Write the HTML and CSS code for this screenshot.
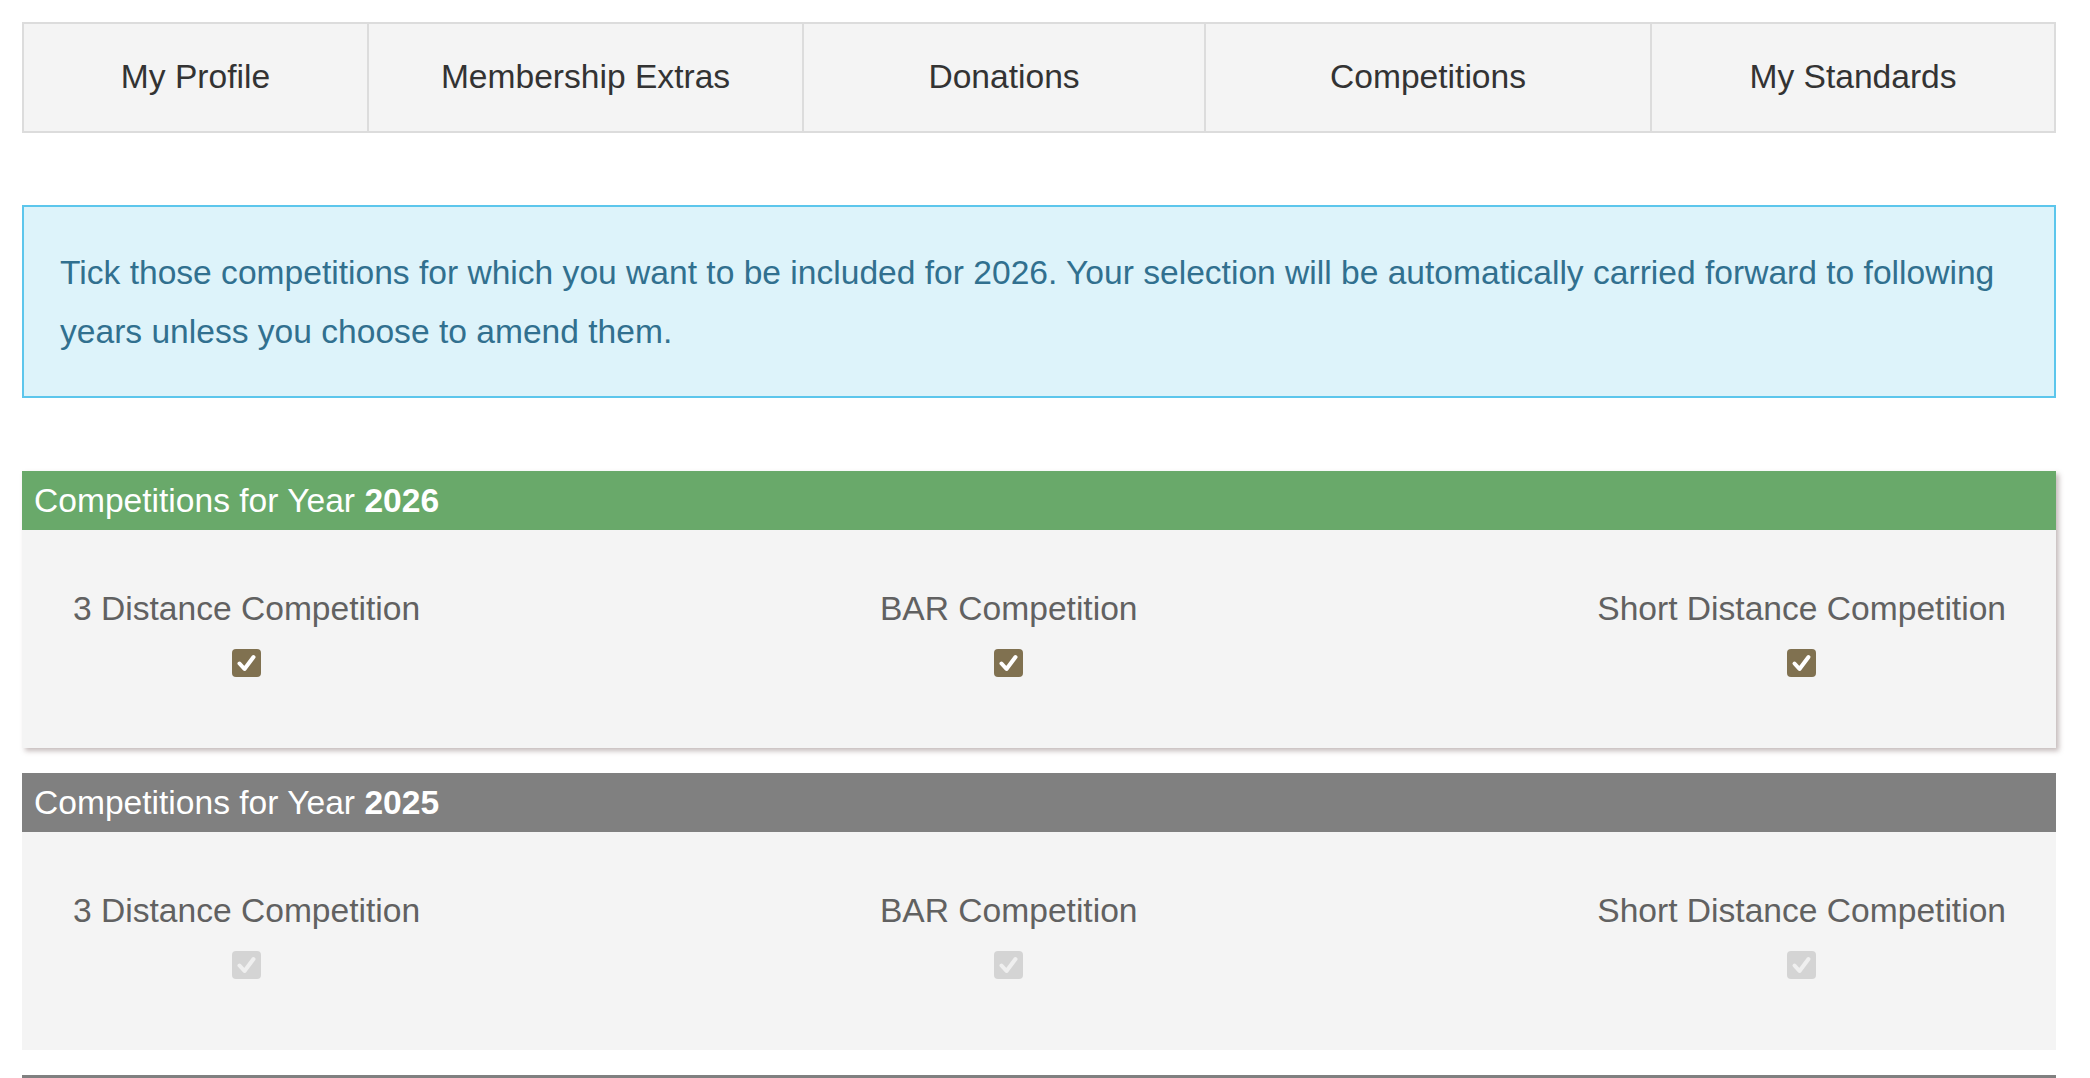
FILE: index.html
```html
<!DOCTYPE html>
<html lang="en">
<head>
<meta charset="utf-8">
<title>Competitions</title>
<link rel="stylesheet" href="styles.css">
</head>
<body>
<div class="page">
  <nav class="tabs">
    <a class="tab">My Profile</a>
    <a class="tab">Membership Extras</a>
    <a class="tab">Donations</a>
    <a class="tab">Competitions</a>
    <a class="tab">My Standards</a>
  </nav>

  <div class="info">Tick those competitions for which you want to be included for 2026. Your selection will be automatically carried forward to following years unless you choose to amend them.</div>

  <section class="panel panel-current">
    <h2 class="panel-head head-green">Competitions for Year <b>2026</b></h2>
    <div class="panel-body">
      <div class="comp">
        <span class="comp-label">3 Distance Competition</span>
        <span class="check"><svg viewBox="0 0 29 28" width="29" height="28"><path d="M7.5 14.5 L12.5 20 L21.5 8" fill="none" stroke="#fff" stroke-width="4" stroke-linecap="round" stroke-linejoin="round"/></svg></span>
      </div>
      <div class="comp">
        <span class="comp-label">BAR Competition</span>
        <span class="check"><svg viewBox="0 0 29 28" width="29" height="28"><path d="M7.5 14.5 L12.5 20 L21.5 8" fill="none" stroke="#fff" stroke-width="4" stroke-linecap="round" stroke-linejoin="round"/></svg></span>
      </div>
      <div class="comp">
        <span class="comp-label">Short Distance Competition</span>
        <span class="check"><svg viewBox="0 0 29 28" width="29" height="28"><path d="M7.5 14.5 L12.5 20 L21.5 8" fill="none" stroke="#fff" stroke-width="4" stroke-linecap="round" stroke-linejoin="round"/></svg></span>
      </div>
    </div>
  </section>

  <section class="panel">
    <h2 class="panel-head head-grey">Competitions for Year <b>2025</b></h2>
    <div class="panel-body">
      <div class="comp">
        <span class="comp-label">3 Distance Competition</span>
        <span class="check check-disabled"><svg viewBox="0 0 29 28" width="29" height="28"><path d="M7.5 14.5 L12.5 20 L21.5 8" fill="none" stroke="#efefef" stroke-width="4" stroke-linecap="round" stroke-linejoin="round"/></svg></span>
      </div>
      <div class="comp">
        <span class="comp-label">BAR Competition</span>
        <span class="check check-disabled"><svg viewBox="0 0 29 28" width="29" height="28"><path d="M7.5 14.5 L12.5 20 L21.5 8" fill="none" stroke="#efefef" stroke-width="4" stroke-linecap="round" stroke-linejoin="round"/></svg></span>
      </div>
      <div class="comp">
        <span class="comp-label">Short Distance Competition</span>
        <span class="check check-disabled"><svg viewBox="0 0 29 28" width="29" height="28"><path d="M7.5 14.5 L12.5 20 L21.5 8" fill="none" stroke="#efefef" stroke-width="4" stroke-linecap="round" stroke-linejoin="round"/></svg></span>
      </div>
    </div>
  </section>

  <div class="panel-next" aria-hidden="true"></div>
</div>
</body>
</html>
```

FILE: styles.css
```css
* {
  box-sizing: border-box;
}

html, body {
  margin: 0;
  padding: 0;
  background: #ffffff;
}

body {
  font-family: "Liberation Sans", Arial, Helvetica, sans-serif;
  font-size: 33.6px;
  color: #333333;
}

.page {
  padding: 22px 34px 40px 22px;
}

/* ---------- tabs ---------- */
.tabs {
  display: grid;
  grid-template-columns: 345px 435px 402px 446px 1fr;
  border: 2px solid #dcdcdc;
  background: #f4f4f4;
}

.tab {
  display: block;
  text-align: center;
  padding: 29px 0 31px;
  line-height: 47px;
  color: #333333;
  border-right: 2px solid #dcdcdc;
  text-decoration: none;
}

.tab:last-child {
  border-right: none;
}

/* ---------- info box ---------- */
.info {
  margin-top: 72px;
  padding: 36px 37px 35px 36px;
  border: 2px solid #5cc6ec;
  background: #ddf3fa;
  color: #31708f;
  line-height: 59px;
}

/* ---------- panels ---------- */
.panel {
  margin-top: 25px;
  background: #f4f4f4;
}

.panel-current {
  margin-top: 73px;
  box-shadow: 3px 3px 5px rgba(90, 60, 60, 0.35);
}

.panel-head {
  margin: 0;
  height: 59px;
  padding: 0 12px;
  font-size: 33.6px;
  font-weight: normal;
  line-height: 59px;
  color: #ffffff;
}

.panel-head b {
  font-weight: bold;
}

.head-green {
  background: #69a96a;
}

.head-grey {
  background: #808080;
}

.panel-body {
  display: flex;
  justify-content: space-between;
  padding: 55px 50px 71px 51px;
}

.comp {
  display: flex;
  flex-direction: column;
  align-items: center;
}

.comp-label {
  line-height: 47px;
  color: #616161;
}

.check {
  display: block;
  margin-top: 17px;
  width: 29px;
  height: 28px;
  border-radius: 4px;
  background: #807150;
}

.check svg {
  display: block;
}

.check-disabled {
  background: #d4d4d4;
}

.panel-next {
  margin-top: 25px;
  height: 59px;
  background: #808080;
}
```
